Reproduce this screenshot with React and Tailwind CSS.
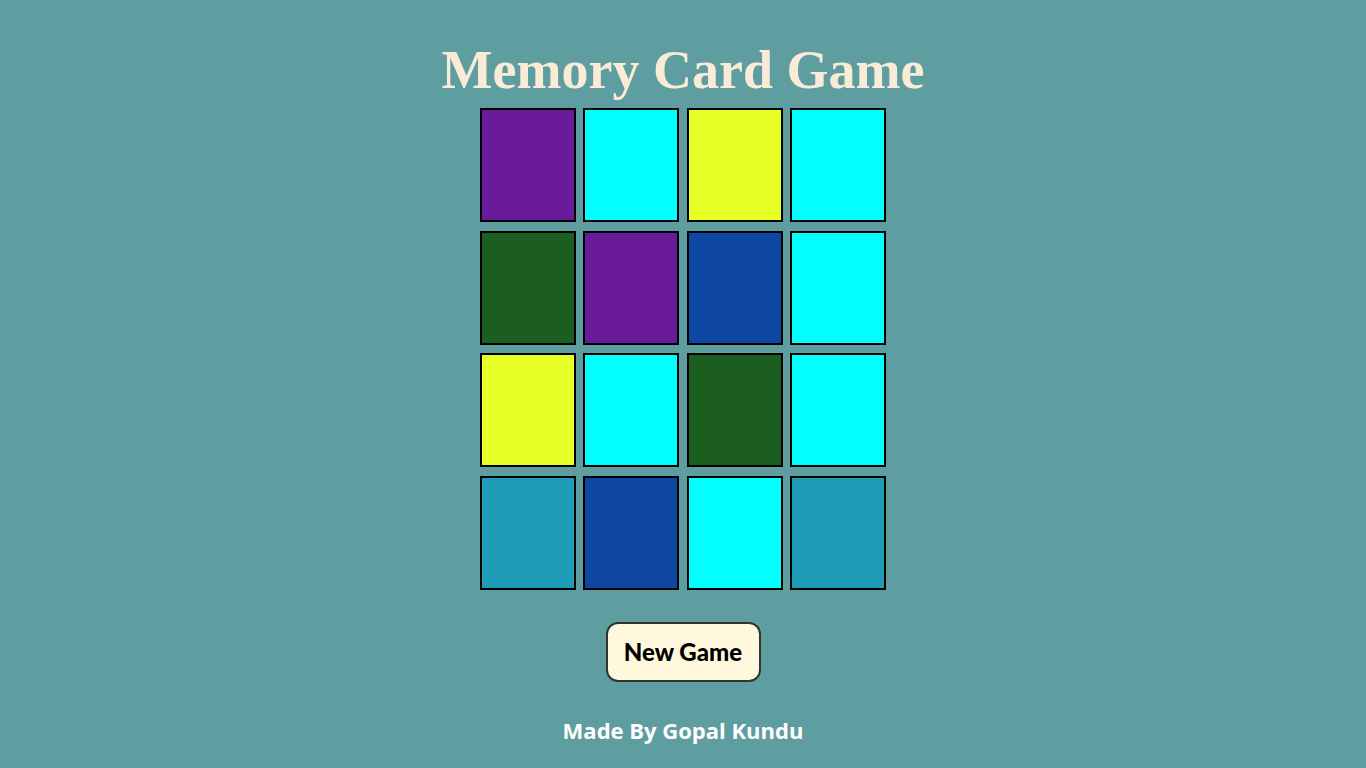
const cards = [
  '#6a1b9a', '#00ffff', '#e5ff27', '#00ffff',
  '#1b5e20', '#6a1b9a', '#0d47a1', '#00ffff',
  '#e5ff27', '#00ffff', '#1b5e20', '#00ffff',
  '#1f9db6', '#0d47a1', '#00ffff', '#1f9db6',
]

const App = () => {
  return (
    <div className="flex min-h-screen flex-col items-center bg-[#5f9ea0]">
      <h1 className="mt-[40px] text-[54px] font-bold leading-[60px] text-[#faebd7] [font-family:'Liberation_Serif',serif]">
        Memory Card Game
      </h1>

      <div className="mt-[8px] grid grid-cols-[repeat(4,96px)] gap-x-[7.3px] gap-y-[8.6px]">
        {cards.map((color, index) => (
          <div
            key={index}
            className="h-[114px] w-[96px] border-2 border-black"
            style={{ backgroundColor: color }}
          />
        ))}
      </div>

      <button
        type="button"
        className="mt-[32px] h-[60px] w-[155px] rounded-[12px] border-2 border-[#333] bg-[#fff8dc] text-[24px] font-black text-black [font-family:Lato,sans-serif]"
      >
        New Game
      </button>

      <p className="mt-[32px] text-[22px] font-bold text-white [font-family:'Comic_Sans_MS','Open_Sans',sans-serif]">
        Made By Gopal Kundu
      </p>
    </div>
  )
}

export default App
